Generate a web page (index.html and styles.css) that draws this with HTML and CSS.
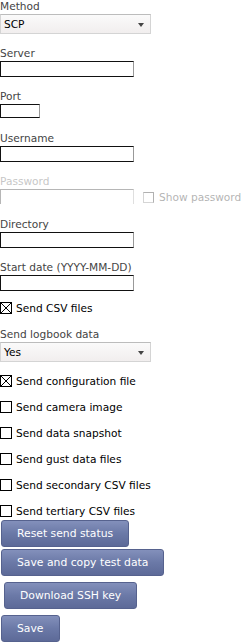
FILE: index.html
```html
<!DOCTYPE html>
<html>
<head>
<meta charset="utf-8">
<link rel="stylesheet" href="styles.css">
</head>
<body>
<form class="form">
  <div class="field">
    <label class="lbl">Method</label>
    <div class="select"><span>SCP</span><i class="arrow"></i></div>
  </div>
  <div class="field">
    <label class="lbl">Server</label>
    <input class="txt wide" type="text">
  </div>
  <div class="field">
    <label class="lbl">Port</label>
    <input class="txt port" type="text">
  </div>
  <div class="field">
    <label class="lbl">Username</label>
    <input class="txt wide" type="text">
  </div>
  <div class="field dim">
    <label class="lbl">Password</label>
    <div class="pwrow">
      <input class="txt wide" type="text">
      <label class="chk show"><span class="box"></span>Show password</label>
    </div>
  </div>
  <div class="field">
    <label class="lbl">Directory</label>
    <input class="txt wide" type="text">
  </div>
  <div class="field start">
    <label class="lbl">Start date (YYYY-MM-DD)</label>
    <input class="txt wide" type="text">
  </div>
  <label class="chk row"><span class="box checked"></span>Send CSV files</label>
  <div class="field">
    <label class="lbl">Send logbook data</label>
    <div class="select"><span>Yes</span><i class="arrow"></i></div>
  </div>
  <label class="chk row"><span class="box checked"></span>Send configuration file</label>
  <label class="chk row"><span class="box"></span>Send camera image</label>
  <label class="chk row"><span class="box"></span>Send data snapshot</label>
  <label class="chk row"><span class="box"></span>Send gust data files</label>
  <label class="chk row"><span class="box"></span>Send secondary CSV files</label>
  <label class="chk row last"><span class="box"></span>Send tertiary CSV files</label>
  <div class="buttons">
    <button type="button" class="btn">Reset send status</button>
    <button type="button" class="btn">Save and copy test data</button>
    <button type="button" class="btn key">Download SSH key</button>
    <button type="button" class="btn">Save</button>
  </div>
</form>
</body>
</html>
```
FILE: styles.css
```css
html, body {
  margin: 0;
  padding: 0;
  background: #fff;
}
body {
  font-family: "DejaVu Sans", sans-serif;
  font-size: 10.6px;
  color: #000;
}
.form {
  display: flex;
  flex-direction: column;
  align-items: flex-start;
}
.field {
  display: flex;
  flex-direction: column;
  align-items: flex-start;
  margin-bottom: 13px;
}
.lbl {
  display: block;
  color: #444;
  line-height: 13px;
  height: 13px;
  margin-bottom: 1px;
  white-space: nowrap;
}
.select {
  box-sizing: border-box;
  width: 151px;
  height: 20px;
  border: 1px solid #d4d4d4;
  border-top-color: #bcbcbc;
  background: linear-gradient(#fafafa, #f1eeee);
  display: flex;
  align-items: center;
  justify-content: space-between;
  padding: 0 6px 0 3px;
}
.arrow {
  width: 0;
  height: 0;
  border-left: 3px solid transparent;
  border-right: 3px solid transparent;
  border-top: 4px solid #444;
  margin-top: 1px;
}
.txt {
  box-sizing: border-box;
  height: 16px;
  margin: 0;
  padding: 0;
  border: 1px solid;
  border-color: #111 #999 #111 #111;
  background: #fff;
  font: inherit;
  flex: none;
}
.wide { width: 134px; }
.port { width: 40px; height: 14px; margin: 0 0 1px 0; }
.dim {
  opacity: 0.3;
  height: 29px;
  overflow: hidden;
  margin-bottom: 14px;
}
.pwrow {
  display: flex;
  align-items: center;
  width: 241px;
}
.chk {
  display: flex;
  align-items: center;
  line-height: 12px;
  white-space: nowrap;
}
.row {
  height: 12px;
  margin: 0 0 14px 0;
}
.row.last { margin-bottom: 3px; }
.start { margin-bottom: 11px; }
.show { margin-left: 9px; flex: none; }
.box {
  box-sizing: border-box;
  width: 12px;
  height: 12px;
  border: 1px solid #000;
  background: #fff;
  margin-right: 4px;
  flex: none;
}
.show .box { border-color: #000 #000 #777 #777; width: 11px; height: 11px; margin-right: 5px; }
.box.checked {
  background:
    linear-gradient(45deg, transparent calc(50% - 0.6px), #000 calc(50% - 0.6px), #000 calc(50% + 0.6px), transparent calc(50% + 0.6px)),
    linear-gradient(-45deg, transparent calc(50% - 0.6px), #000 calc(50% - 0.6px), #000 calc(50% + 0.6px), transparent calc(50% + 0.6px)),
    #fff;
}
.buttons {
  display: flex;
  flex-direction: column;
  align-items: flex-start;
}
.btn {
  box-sizing: border-box;
  height: 27px;
  margin: 0 0 2px 1px;
  padding: 0 15px;
  border: 1px solid #56628e;
  border-radius: 3px;
  background: linear-gradient(#8390bb, #6b79a7 50%, #5d6a98);
  color: #fff;
  font: inherit;
  font-size: 10.8px;
}
.key { margin: 4px 0 6px 4px; padding: 0 15px; }
```
